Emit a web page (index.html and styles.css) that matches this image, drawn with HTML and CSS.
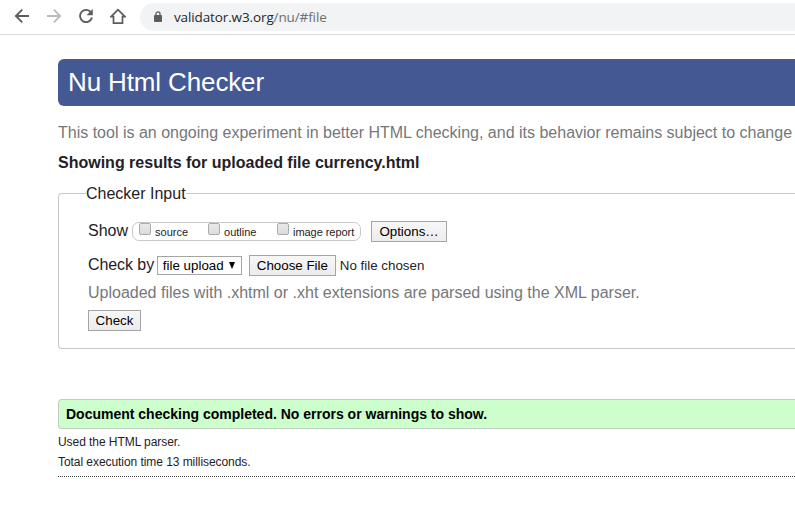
FILE: index.html
```html
<!DOCTYPE html>
<html lang="en">
<head>
<meta charset="utf-8">
<title>Nu Html Checker</title>
<link rel="stylesheet" href="styles.css">
</head>
<body>
<header class="toolbar">
  <svg class="nav" viewBox="0 0 16 16"><path d="M15 8H2M8.2 1.7 1.9 8l6.3 6.3"/></svg>
  <svg class="nav off" viewBox="0 0 16 16"><path d="M1 8h13M7.8 1.7 14.1 8l-6.3 6.3"/></svg>
  <svg class="nav" viewBox="0 0 16 16"><path d="M13.2 4.6A6.1 6.1 0 1 0 14 9.6"/><path class="fill" d="M14.8 1v6.3H8.5z"/></svg>
  <svg class="nav home" viewBox="0 0 16 16"><path d="M8 1.6 1.2 8.6h2.3v6.5h9V8.6h2.3z"/></svg>
  <div class="address">
    <svg class="lock" viewBox="0 0 8 11"><path class="shackle" d="M2 5V2.8a2 2 0 0 1 4 0V5"/><rect y="4" width="8" height="7" rx="1"/></svg>
    <span class="url">validator.w3.org<span class="path">/nu/#file</span></span>
  </div>
</header>
<main>
  <h1>Nu Html Checker</h1>
  <p class="note intro">This tool is an ongoing experiment in better HTML checking, and its behavior remains subject to change</p>
  <h2>Showing results for uploaded file currency.html</h2>
  <fieldset>
    <legend>Checker Input</legend>
    <div class="row show">
      <span class="label">Show</span>
      <div class="checks">
        <label><i class="box"></i>source</label>
        <label><i class="box"></i>outline</label>
        <label><i class="box"></i>image report</label>
      </div>
      <button class="options">Options…</button>
    </div>
    <div class="row by">
      <span class="label">Check by</span>
      <div class="select"><span>file upload</span><svg viewBox="0 0 6 7"><path d="M0 0h6L3 7z"/></svg></div>
      <button class="choose">Choose File</button>
      <span class="nofile">No file chosen</span>
    </div>
    <p class="note hint">Uploaded files with .xhtml or .xht extensions are parsed using the XML parser.</p>
    <button class="check">Check</button>
  </fieldset>
  <p class="success">Document checking completed. No errors or warnings to show.</p>
  <p class="detail">Used the HTML parser.</p>
  <p class="detail">Total execution time 13 milliseconds.</p>
  <hr>
</main>
</body>
</html>
```

FILE: styles.css
```css
* { box-sizing: border-box; }
body {
  margin: 0;
  height: 510px;
  overflow: hidden;
  background: #fff;
  color: #1f2126;
  font: 16px/20px "Liberation Sans", Arial, sans-serif;
}
h1, h2, p { margin: 0; white-space: nowrap; }
.toolbar {
  display: flex;
  align-items: center;
  height: 35px;
  padding: 0 0 3px 14px;
  border-bottom: 1px solid #d9dadc;
}
.nav {
  flex: none;
  width: 16px;
  height: 16px;
  margin-right: 16px;
  fill: none;
  stroke: #5a5d61;
  stroke-width: 1.9;
}
.nav.off { stroke: #babcbe; }
.nav .fill { fill: #5a5d61; stroke: none; }
.nav.home { margin-right: 14px; stroke-width: 1.7; }
.address {
  display: flex;
  align-items: center;
  flex: 1;
  height: 28px;
  margin-top: 2px;
  padding-left: 14px;
  border-radius: 14px 0 0 14px;
  background: #f1f3f4;
}
.lock { width: 8px; height: 11px; margin-right: 12px; fill: #5a5d61; }
.shackle { fill: none; stroke: #5a5d61; stroke-width: 1.3; }
.url {
  font: 13.5px/20px "Open Sans", "Noto Sans", sans-serif;
  letter-spacing: -.12px;
  color: #26282b;
}
.path { color: #6b6e72; }
main { padding: 24px 0 0 58px; }
h1 {
  height: 47px;
  padding-left: 10px;
  border-radius: 6px 0 0 6px;
  background: #445994;
  color: #fff;
  font-size: 26px;
  font-weight: 400;
  letter-spacing: -.13px;
  line-height: 46px;
}
.note { color: #75777a; }
.intro { margin-top: 17px; }
h2 { margin-top: 10px; font-size: 16px; line-height: 20px; }
fieldset {
  min-width: 0;
  height: 166px;
  margin: 10px 0 0;
  padding: 18px 0 0 29px;
  border: 1px solid #c8c8c8;
  border-right: 0;
  border-radius: 4px 0 0 4px;
}
legend { height: 20px; margin-left: -2px; padding: 0; line-height: 22px; }
.row { display: flex; align-items: center; }
.show { height: 21px; }
.label { flex: none; line-height: 20px; margin-top: -2px; }
.by .label { letter-spacing: -.08px; }
.checks {
  display: flex;
  width: 229px;
  height: 19px;
  margin: -1px 10px 0 4px;
  padding-left: 6px;
  border: 1px solid #c8c8c8;
  border-radius: 7px;
  font-size: 11px;
  line-height: 19px;
}
.checks label { display: flex; flex: none; width: 69px; white-space: nowrap; }
.checks label:last-child { width: 84px; letter-spacing: -.05px; }
.box {
  width: 12px;
  height: 12px;
  margin: 0 4px 0 0;
  flex: none;
  border: 1px solid #ababab;
  border-radius: 2px;
  background: linear-gradient(#e9e9e9, #dcdcdc);
}
button {
  display: block;
  flex: none;
  height: 21px;
  padding: 0;
  border: 1px solid #a5a5a5;
  border-radius: 0;
  background: linear-gradient(#f7f7f7, #ececec);
  color: #000;
  font: 13.33px/19px "Liberation Sans", Arial, sans-serif;
}
.options { width: 76px; }
.by { height: 21px; margin-top: 13px; }
.select {
  display: flex;
  align-items: center;
  justify-content: space-between;
  width: 85px;
  height: 19px;
  margin: 0 7px 0 2.8px;
  padding: 0 6px 0 5px;
  border: 1px solid #a5a5a5;
  color: #000;
  font-size: 13.33px;
}
.select svg { width: 6px; height: 7px; }
.choose { width: 87px; }
.nofile { margin-left: 4px; font-size: 13.33px; }
.hint { margin-top: 7px; }
.check { width: 53px; margin-top: 7px; }
.success {
  height: 30px;
  margin-top: 50px;
  padding-left: 7px;
  border: 1px solid #c2ccc2;
  border-right: 0;
  border-radius: 4px 0 0 4px;
  background: #cfc;
  color: #000;
  font-size: 14px;
  font-weight: 700;
  line-height: 28px;
}
.detail { font-size: 12px; line-height: 20px; letter-spacing: -.06px; }
.success + .detail { margin-top: 3px; }
hr { height: 0; margin: 4px 0 0; border: 0; border-top: 1px dotted #444; }
```
